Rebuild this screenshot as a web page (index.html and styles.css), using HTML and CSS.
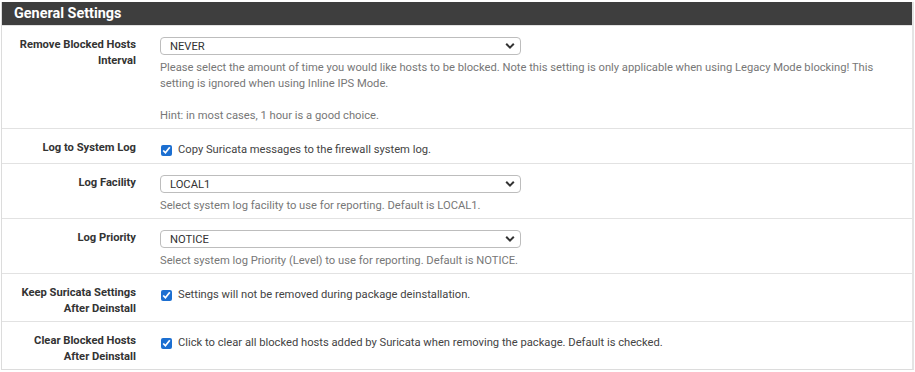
FILE: index.html
```html
<!DOCTYPE html>
<html lang="en">
<head>
    <meta charset="UTF-8">
    <meta name="viewport" content="width=device-width, initial-scale=1.0">
    <title>Suricata - Global Settings</title>
    <link rel="stylesheet" href="styles.css">
</head>
<body>
    <div class="panel">
        <div class="panel-heading">General Settings</div>

        <div class="form-row">
            <label class="form-label">Remove Blocked Hosts Interval</label>
            <div class="form-control">
                <div class="select-wrap">
                    <select>
                        <option>NEVER</option>
                    </select>
                    <svg class="chevron" viewBox="0 0 10 8" width="10" height="8"><path d="M1.2 1.8 L5 5.6 L8.8 1.8" fill="none" stroke="#333" stroke-width="2"/></svg>
                </div>
                <div class="help">Please select the amount of time you would like hosts to be blocked. Note this setting is only applicable when using Legacy Mode blocking! This setting is ignored when using Inline IPS Mode.<br><br>Hint: in most cases, 1 hour is a good choice.</div>
            </div>
        </div>

        <div class="form-row">
            <label class="form-label">Log to System Log</label>
            <div class="form-control">
                <label class="check"><input type="checkbox" checked> Copy Suricata messages to the firewall system log.</label>
            </div>
        </div>

        <div class="form-row">
            <label class="form-label">Log Facility</label>
            <div class="form-control">
                <div class="select-wrap">
                    <select>
                        <option>LOCAL1</option>
                    </select>
                    <svg class="chevron" viewBox="0 0 10 8" width="10" height="8"><path d="M1.2 1.8 L5 5.6 L8.8 1.8" fill="none" stroke="#333" stroke-width="2"/></svg>
                </div>
                <div class="help">Select system log facility to use for reporting. Default is LOCAL1.</div>
            </div>
        </div>

        <div class="form-row">
            <label class="form-label">Log Priority</label>
            <div class="form-control">
                <div class="select-wrap">
                    <select>
                        <option>NOTICE</option>
                    </select>
                    <svg class="chevron" viewBox="0 0 10 8" width="10" height="8"><path d="M1.2 1.8 L5 5.6 L8.8 1.8" fill="none" stroke="#333" stroke-width="2"/></svg>
                </div>
                <div class="help">Select system log Priority (Level) to use for reporting. Default is NOTICE.</div>
            </div>
        </div>

        <div class="form-row">
            <label class="form-label">Keep Suricata Settings After Deinstall</label>
            <div class="form-control">
                <label class="check"><input type="checkbox" checked> Settings will not be removed during package deinstallation.</label>
            </div>
        </div>

        <div class="form-row">
            <label class="form-label">Clear Blocked Hosts After Deinstall</label>
            <div class="form-control">
                <label class="check"><input type="checkbox" checked> Click to clear all blocked hosts added by Suricata when removing the package. Default is checked.</label>
            </div>
        </div>
    </div>
</body>
</html>
```

FILE: styles.css
```css
body {
    margin: 0;
    font-family: Roboto, 'Liberation Sans', sans-serif;
    background-color: #fff;
    color: #333;
}
.panel {
    margin: 2px 0 0 1px;
    width: 910px;
    border: 1px solid #dcdcdc;
    border-top: none;
    border-right: 2px solid #e4e4e4;
}
.panel-heading {
    background-color: #3e3e3e;
    color: #fff;
    font-size: 14.4px;
    font-weight: bold;
    height: 23px;
    line-height: 23px;
    padding-left: 12px;
}
.form-row {
    display: grid;
    grid-template-columns: 134px 1fr;
    column-gap: 24px;
    padding: 11px 0 4px;
    border-top: 1px solid #e2e2e2;
}
.form-row:first-of-type {
    border-top: none;
}
.form-label {
    text-align: right;
    font-size: 11.2px;
    font-weight: bold;
    line-height: 16px;
    color: #333;
    padding-left: 10px;
}
.form-control {
    padding-right: 15px;
}
.select-wrap {
    position: relative;
    width: 361px;
}
.select-wrap select {
    display: block;
    width: 100%;
    height: 18px;
    padding: 0 0 0 9px;
    border: 1px solid #bdbdbd;
    border-radius: 4px;
    background-color: #fff;
    color: #333;
    font-family: Roboto, 'Liberation Sans', sans-serif;
    font-size: 11.2px;
    appearance: none;
    -webkit-appearance: none;
}
.chevron {
    position: absolute;
    right: 6px;
    top: 5px;
}
.help {
    margin-top: 5px;
    font-size: 11.2px;
    line-height: 16px;
    color: #777;
}
.check {
    display: flex;
    align-items: center;
    gap: 6px;
    padding: 2px 0 1px;
    font-size: 11.2px;
    line-height: 16px;
    color: #444;
}
.check input {
    margin: 0 0 0 1px;
    width: 11px;
    height: 11px;
    accent-color: #1c6fd1;
}
```
